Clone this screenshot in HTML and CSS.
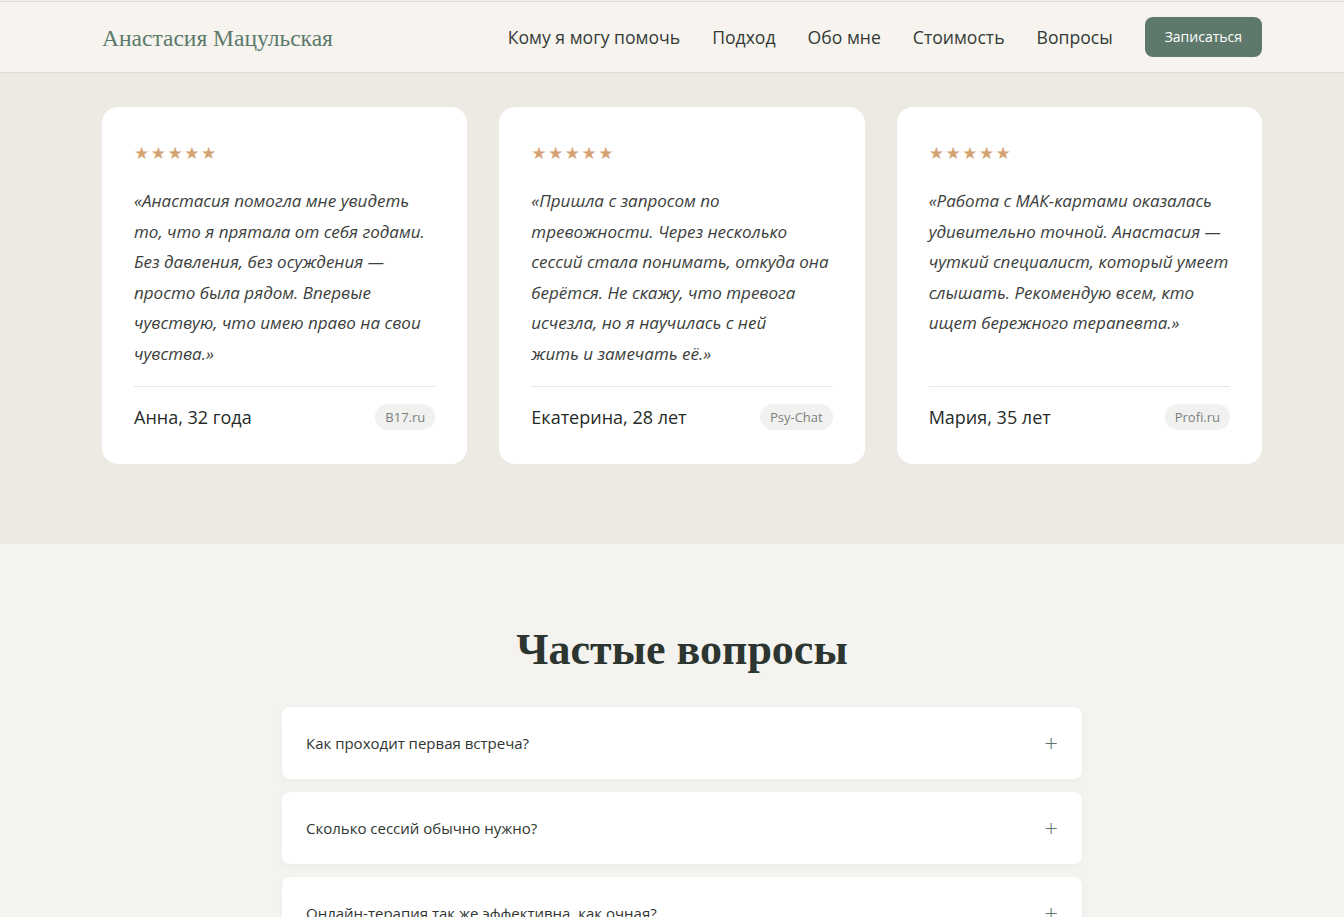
FILE: index.html
```html
<!DOCTYPE html>
<html lang="ru">
<head>
  <meta charset="UTF-8">
  <title>Анастасия Мацульская — психолог</title>
  <link rel="stylesheet" href="styles.css">
</head>
<body>

  <header class="header">
    <div class="container header-inner">
      <a class="logo" href="#">Анастасия Мацульская</a>
      <nav class="nav">
        <a href="#">Кому я могу помочь</a>
        <a href="#">Подход</a>
        <a href="#">Обо мне</a>
        <a href="#">Стоимость</a>
        <a href="#">Вопросы</a>
        <a class="btn" href="#">Записаться</a>
      </nav>
    </div>
  </header>

  <section class="reviews">
    <div class="container review-grid">
      <div class="review">
        <div class="stars">★★★★★</div>
        <p class="quote">«Анастасия помогла мне увидеть то, что я прятала от себя годами. Без давления, без осуждения — просто была рядом. Впервые чувствую, что имею право на свои чувства.»</p>
        <div class="review-foot">
          <span class="author">Анна, 32 года</span>
          <span class="source">B17.ru</span>
        </div>
      </div>
      <div class="review">
        <div class="stars">★★★★★</div>
        <p class="quote">«Пришла с запросом по тревожности. Через несколько сессий стала понимать, откуда она берётся. Не скажу, что тревога исчезла, но я научилась с ней жить&nbsp;и&nbsp;замечать её.»</p>
        <div class="review-foot">
          <span class="author">Екатерина, 28 лет</span>
          <span class="source">Psy-Chat</span>
        </div>
      </div>
      <div class="review">
        <div class="stars">★★★★★</div>
        <p class="quote">«Работа с МАК-картами оказалась удивительно точной. Анастасия — чуткий специалист, который умеет слышать. Рекомендую всем, кто ищет бережного терапевта.»</p>
        <div class="review-foot">
          <span class="author">Мария, 35 лет</span>
          <span class="source">Profi.ru</span>
        </div>
      </div>
    </div>
  </section>

  <section class="faq">
    <h2>Частые вопросы</h2>
    <div class="faq-list">
      <div class="faq-item"><span>Как проходит первая встреча?</span><span class="plus">+</span></div>
      <div class="faq-item"><span>Сколько сессий обычно нужно?</span><span class="plus">+</span></div>
      <div class="faq-item"><span>Онлайн-терапия так же эффективна, как очная?</span><span class="plus">+</span></div>
    </div>
  </section>

</body>
</html>
```

FILE: styles.css
```css
body {
  margin: 0;
  font-family: "Open Sans", sans-serif;
  color: #2f3531;
  background: #f5f3ef;
}
a {
  text-decoration: none;
  color: inherit;
}
.header,
.reviews,
.faq {
  padding-left: 20px;
}
.container {
  max-width: 1160px;
  margin: 0 auto;
}

/* header */
.header {
  background: #f7f3ef;
  border-top: 1px solid #dcd9d9;
  margin-top: 1px;
  border-bottom: 1px solid #dedad5;
}
.header-inner {
  height: 70px;
  display: flex;
  align-items: center;
  justify-content: space-between;
}
.logo {
  font-family: "Liberation Serif", serif;
  font-size: 23.5px;
  color: #5b7a6b;
  padding-top: 3px;
}
.nav {
  display: flex;
  align-items: center;
  gap: 32px;
  font-size: 17.6px;
  color: #333a36;
}
.btn {
  background: #5e796b;
  color: #fff;
  font-size: 14px;
  padding: 0 20px;
  height: 40px;
  line-height: 40px;
  border-radius: 8px;
}

/* reviews */
.reviews {
  background: #ede9e3;
  padding-top: 34px;
  padding-bottom: 80px;
}
.review-grid {
  display: grid;
  grid-template-columns: repeat(3, 1fr);
  gap: 32px;
}
.review {
  background: #fff;
  border-radius: 16px;
  padding: 33px 32px 33px;
  display: flex;
  flex-direction: column;
}
.stars {
  color: #d4a373;
  font-size: 17px;
  line-height: 26px;
  letter-spacing: 1.5px;
  font-family: "DejaVu Sans", sans-serif;
  margin-bottom: 20px;
}
.quote {
  flex: 1;
  margin: 0 0 16px;
  font-style: italic;
  font-size: 17px;
  line-height: 1.8;
  color: #3b403c;
}
.review-foot {
  border-top: 1px solid #e6e6e3;
  padding-top: 17px;
  display: flex;
  justify-content: space-between;
  align-items: center;
}
.author {
  font-size: 18px;
  font-weight: 500;
  line-height: 27px;
  color: #262b28;
}
.source {
  font-size: 13px;
  color: #7b807d;
  background: #f1f2f0;
  border-radius: 14px;
  padding: 4px 10px;
}

/* faq */
.faq {
  padding-top: 82px;
  padding-bottom: 60px;
}
.faq h2 {
  margin: 0 0 33px;
  text-align: center;
  font-family: "Liberation Serif", serif;
  font-size: 44px;
  line-height: 48px;
  color: #2d3530;
}
.faq-list {
  width: 800px;
  margin: 0 auto;
}
.faq-item {
  background: #fff;
  border-radius: 8px;
  height: 72px;
  padding: 0 24px;
  margin-bottom: 13px;
  display: flex;
  align-items: center;
  justify-content: space-between;
  font-size: 15px;
  color: #2f3531;
  box-shadow: 0 2px 10px rgba(0,0,0,0.03);
}
.plus {
  color: #5e796b;
  font-size: 24px;
  font-weight: 300;
}
```
